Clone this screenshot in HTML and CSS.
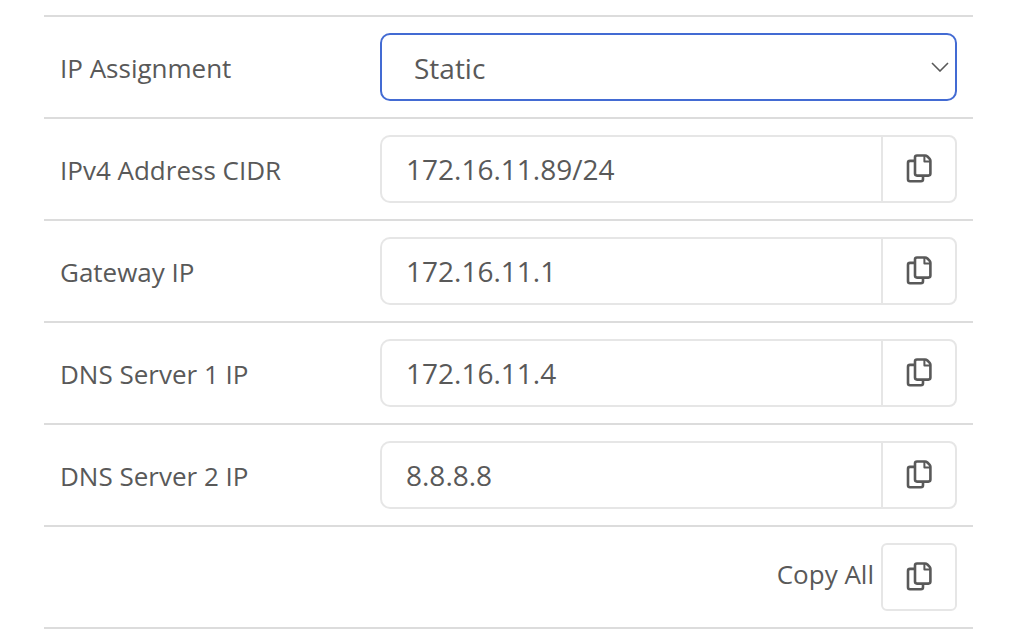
FILE: index.html
```html
<!DOCTYPE html>
<html lang="en">
<head>
<meta charset="utf-8">
<meta name="viewport" content="width=device-width, initial-scale=1">
<title>IP Assignment</title>
<link rel="stylesheet" href="styles.css">
</head>
<body>
<svg class="sprite" aria-hidden="true">
  <symbol id="copy" viewBox="0 0 28 32">
    <g fill="none" stroke="currentColor" stroke-width="2.6" stroke-linejoin="round">
      <path d="M10 7.9H5Q3 7.9 3 9.9V26.3Q3 28.2 5 28.2H16Q18 28.2 18 26.3V22.8"/>
      <path d="M12 2.5H20Q21.3 2.5 22.4 3.5L24.5 5.6Q25.4 6.6 25.4 7.8V20.6Q25.4 22.6 23.4 22.6H12Q10 22.6 10 20.6V4.5Q10 2.5 12 2.5Z"/>
      <path d="M19.4 3V8.4H25" stroke-width="2"/>
    </g>
  </symbol>
</svg>
<form class="settings">
  <div class="row">
    <label class="label" for="assignment">IP Assignment</label>
    <div class="select-wrap">
      <select class="select" id="assignment">
        <option selected>Static</option>
        <option>DHCP</option>
      </select>
      <svg class="chevron" viewBox="0 0 18 10" aria-hidden="true"><path d="M1 1L9 9L17 1" fill="none" stroke="currentColor" stroke-width="1.6"/></svg>
    </div>
  </div>
  <div class="row">
    <label class="label" for="address">IPv4 Address CIDR</label>
    <div class="group">
      <input class="input" id="address" type="text" value="172.16.11.89/24">
      <button class="copy" type="button" aria-label="Copy IPv4 address"><svg class="icon"><use href="#copy"/></svg></button>
    </div>
  </div>
  <div class="row">
    <label class="label" for="gateway">Gateway IP</label>
    <div class="group">
      <input class="input" id="gateway" type="text" value="172.16.11.1">
      <button class="copy" type="button" aria-label="Copy gateway IP"><svg class="icon"><use href="#copy"/></svg></button>
    </div>
  </div>
  <div class="row">
    <label class="label" for="dns1">DNS Server 1 IP</label>
    <div class="group">
      <input class="input" id="dns1" type="text" value="172.16.11.4">
      <button class="copy" type="button" aria-label="Copy DNS server 1 IP"><svg class="icon"><use href="#copy"/></svg></button>
    </div>
  </div>
  <div class="row">
    <label class="label" for="dns2">DNS Server 2 IP</label>
    <div class="group">
      <input class="input" id="dns2" type="text" value="8.8.8.8">
      <button class="copy" type="button" aria-label="Copy DNS server 2 IP"><svg class="icon"><use href="#copy"/></svg></button>
    </div>
  </div>
  <div class="row row-end">
    <label class="copy-label" for="copy-all">Copy All</label>
    <button class="copy copy-single" id="copy-all" type="button"><svg class="icon"><use href="#copy"/></svg></button>
  </div>
</form>
</body>
</html>
```

FILE: styles.css
```css
* {
  box-sizing: border-box;
}

body {
  margin: 0;
  background: #fff;
  color: #595959;
  font-family: "Open Sans", "Noto Sans", sans-serif;
  font-size: 26px;
  line-height: 36px;
}

.sprite {
  display: none;
}

.settings {
  margin: 15px 45px 0 44px;
  border-bottom: 2px solid #dcdcdc;
}

.row {
  display: flex;
  align-items: center;
  padding: 16px;
  border-top: 2px solid #dcdcdc;
}

.label {
  flex: 0 0 320px;
  padding-top: 2px;
}

.select-wrap,
.group {
  position: relative;
  display: flex;
  flex: 1;
  min-width: 0;
}

.select,
.input {
  flex: 1;
  min-width: 0;
  height: 68px;
  margin: 0;
  border: 2px solid #e6e6e6;
  background: #fff;
  color: inherit;
  font-family: inherit;
  font-size: 28px;
  outline: none;
}

.select {
  padding: 2px 48px 0 32px;
  border-color: #436bd3;
  border-radius: 10px;
  appearance: none;
}

.chevron {
  position: absolute;
  top: 29px;
  right: 8px;
  width: 18px;
  height: 10px;
  pointer-events: none;
}

.input {
  padding: 0 24px;
  border-right: 0;
  border-radius: 10px 0 0 10px;
}

.copy {
  display: flex;
  flex: 0 0 76px;
  align-items: center;
  justify-content: center;
  height: 68px;
  padding: 0;
  border: 2px solid #e6e6e6;
  border-radius: 0 8px 8px 0;
  background: #fff;
  color: inherit;
}

.copy-single {
  border-radius: 6px;
}

.icon {
  width: 28px;
  height: 32px;
}

.row-end {
  justify-content: flex-end;
  gap: 7px;
}

.copy-label {
  padding-bottom: 6px;
}
```
